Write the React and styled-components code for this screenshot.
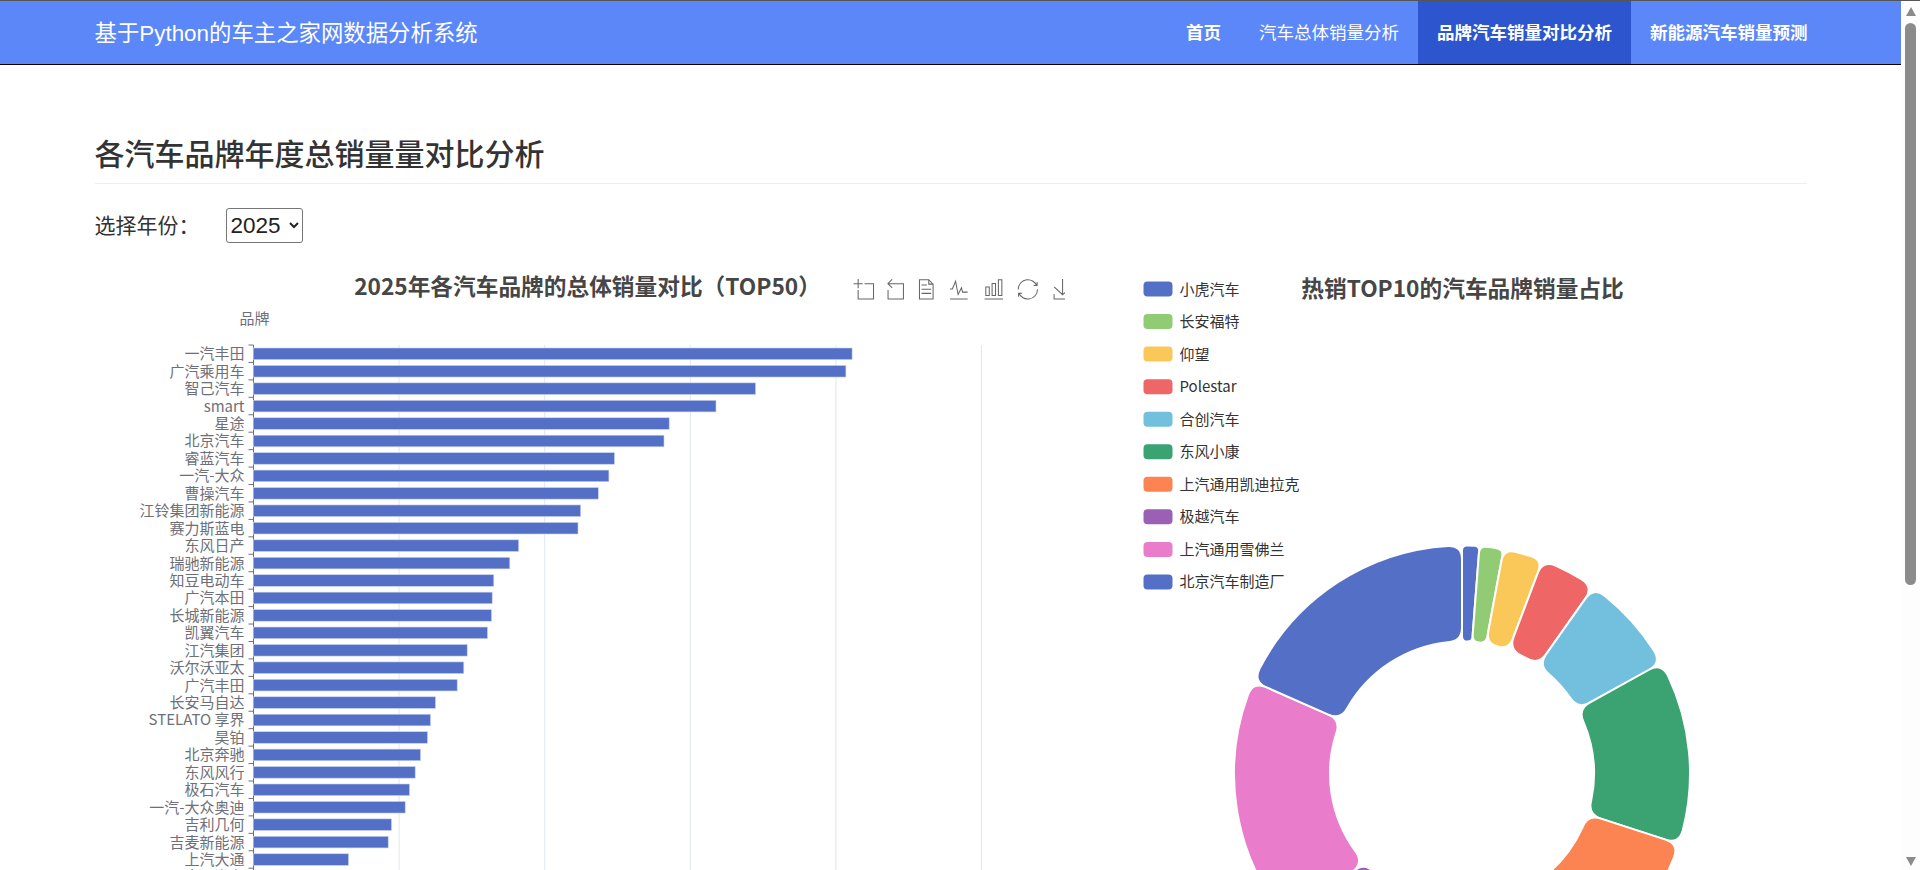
import React from 'react';
import styled, { createGlobalStyle } from 'styled-components';

const CJK = '"Liberation Sans", "Noto Sans CJK SC", sans-serif';
const CHART_FONT = '"Noto Sans CJK SC", "Noto Sans", sans-serif';

const GlobalStyle = createGlobalStyle`
  body {
    margin: 0;
    background: #fff;
    color: #333;
    border-top: 1px solid #555;
    font-family: ${CJK};
  }
`;

const Page = styled.div`
  padding-right: 19px;
`;
const TopBar = styled.nav`
  height: 63px;
  background: #5b87f8;
  border-bottom: 1px solid #000;
`;
const Container = styled.div`
  width: 1712px;
  margin: 0 auto;
`;
const BarInner = styled(Container)`
  display: flex;
  justify-content: space-between;
  align-items: stretch;
  height: 100%;
`;
const Brand = styled.a`
  align-self: center;
  padding-bottom: 3px;
  font-size: 22.4px;
  color: #fff;
`;
const NavList = styled.ul`
  display: flex;
  list-style: none;
  margin: 0 -20px 0 0;
  padding: 0;
`;
const NavItem = styled.li`
  display: flex;
  align-items: center;
  padding: 0 19px 3px;
  font-size: 17.5px;
  font-weight: ${(p) => (p.$bold ? 700 : 400)};
  color: #fff;
  background: ${(p) => (p.$active ? '#2c55ce' : 'transparent')};
`;
const PageHeader = styled.h1`
  margin: 64px 0 0;
  padding: 3px 0 6px;
  height: 45px;
  line-height: 45px;
  font-size: 30px;
  font-weight: 500;
  color: #333;
  border-bottom: 1px solid #eee;
`;
const YearRow = styled.div`
  display: flex;
  align-items: center;
  gap: 26px;
  margin-top: 24px;
  font-size: 21px;
`;
const YearLabel = styled.label`
  padding-bottom: 4px;
`;
const YearSelect = styled.select`
  width: 77px;
  height: 35px;
  font-family: "Liberation Sans", sans-serif;
  font-size: 22.5px;
  color: #222;
  background: #fff;
  border: 1px solid #767676;
  border-radius: 3px;
`;
const ChartRow = styled.div`
  display: flex;
  margin-top: 18px;
  height: 1000px;
`;
const ChartSvg = styled.svg`
  display: block;
  flex: none;
  font-family: ${CHART_FONT};
`;
const ChartTitle = styled.text`
  font-size: 22.7px;
  font-weight: 700;
  fill: #464646;
  text-anchor: middle;
  dominant-baseline: central;
`;
const AxisText = styled.text`
  font-size: 15px;
  fill: #6e7079;
  text-anchor: ${(p) => p.$anchor || 'end'};
  dominant-baseline: central;
`;
const LegendText = styled.text`
  font-size: 15px;
  fill: #333;
  dominant-baseline: central;
`;
const ScrollRail = styled.div`
  position: fixed;
  top: 1px;
  right: 0;
  bottom: 0;
  width: 19px;
  display: flex;
  flex-direction: column;
  align-items: center;
  background: #fdfdfd;
`;
const ScrollArrow = styled.span`
  width: 0;
  height: 0;
  border-left: 5.5px solid transparent;
  border-right: 5.5px solid transparent;
  border-${(p) => (p.$down ? 'top' : 'bottom')}: 9px solid #8b8b8b;
  margin-top: ${(p) => (p.$down ? 'auto' : '6px')};
  margin-bottom: ${(p) => (p.$down ? '4px' : '0')};
`;
const ScrollThumb = styled.span`
  width: 11px;
  height: 562px;
  margin-top: 7px;
  background: #8b8b8b;
  border-radius: 6px;
`;

const brands = [
  ['一汽丰田', 851.6], ['广汽乘用车', 845.4], ['智己汽车', 755.1], ['smart', 715.5],
  ['星途', 668.7], ['北京汽车', 663.5], ['睿蓝汽车', 614], ['一汽-大众', 608.4],
  ['曹操汽车', 597.8], ['江铃集团新能源', 580.2], ['赛力斯蓝电', 577.5], ['东风日产', 518.2],
  ['瑞驰新能源', 509.3], ['知豆电动车', 493.3], ['广汽本田', 491.7], ['长城新能源', 491],
  ['凯翼汽车', 487], ['江汽集团', 466.7], ['沃尔沃亚太', 463.3], ['广汽丰田', 456.7],
  ['长安马自达', 435], ['STELATO 享界', 430], ['昊铂', 427], ['北京奔驰', 420],
  ['东风风行', 414.7], ['极石汽车', 409], ['一汽-大众奥迪', 404.7], ['吉利几何', 391],
  ['吉麦新能源', 387.7], ['上汽大通', 348], ['岚图汽车', 340],
];

const toolIcons = [
  [853, 'M0,13.5h26.9 M13.5,26.9V0 M32.1,13.5H58V58H13.5 V32.1'],
  [884, 'M22,1.4L9.9,13.5l12.3,12.3 M10.3,13.5H54.9v44.6 H10.3v-26'],
  [915, 'M17.5,17.3H33 M17.5,17.3H33 M45.4,29.5h-28 M11.5,2v56H51V14.8L38.4,2H11.5z M38.4,2.2v12.7H51 M45.4,41.7h-28'],
  [948, 'M4.1,28.9h7.1l9.3-22l7.4,38l9.7-19.7l3,12.8h14.9M4.1,58h51.4'],
  [983, 'M6.7,22.9h10V48h-10V22.9zM24.9,13h10v35h-10V13zM43.2,2h10v46h-10V2zM3.1,58h53.7'],
  [1017, 'M3.8,33.4 M47,18.9h9.8V8.7 M56.3,20.1 C52.1,9,40.5,0.6,26.8,2.1C12.6,3.7,1.6,16.2,2.1,30.6 M13,41.1H3.1v10.2 M3.7,39.9c4.2,11.1,15.8,19.5,29.5,18 c14.2-1.6,25.2-14.1,24.7-28.5'],
  [1052, 'M4.7,22.9L29.3,45.5L54.7,23.4M4.6,43.6L4.6,58L53.8,58L53.8,43.6M29.2,45.1L29.2,0'],
];

const slices = [
  ['小虎汽车', '#5470c6', 0, 4.4],
  ['长安福特', '#91cc75', 4.4, 10.5],
  ['仰望', '#fac858', 10.5, 20.7],
  ['Polestar', '#ee6666', 20.7, 35.2],
  ['合创汽车', '#73c0de', 35.2, 61],
  ['东风小康', '#3ba272', 61, 108],
  ['上汽通用凯迪拉克', '#fc8452', 108, 168],
  ['极越汽车', '#9a60b4', 168, 228],
  ['上汽通用雪佛兰', '#ea7ccc', 228, 293.8],
  ['北京汽车制造厂', '#5470c6', 293.8, 360],
];

const ROW = 17.44;
const AXIS_TOP = 346;
const AXIS_X = 253;
const GRID = [398.6, 544.2, 689.8, 835.4, 981];

const CX = 1461.5;
const CY = 774.5;
const OUTER = 228;
const INNER = 132;

const polar = (r, deg) => {
  const a = (deg * Math.PI) / 180;
  return `${(CX + r * Math.sin(a)).toFixed(2)} ${(CY - r * Math.cos(a)).toFixed(2)}`;
};

// ring slice with rounded corners, angles clockwise from 12 o'clock
const slicePath = (from, to) => {
  const span = ((to - from) * Math.PI) / 180;
  const c = Math.min(14, (INNER * span) / 2);
  const dO = ((c / OUTER) * 180) / Math.PI;
  const dI = ((c / INNER) * 180) / Math.PI;
  const big = to - from > 180 ? 1 : 0;
  return [
    `M${polar(OUTER, from + dO)}`,
    `A${OUTER} ${OUTER} 0 ${big} 1 ${polar(OUTER, to - dO)}`,
    `Q${polar(OUTER, to)} ${polar(OUTER - c, to)}`,
    `L${polar(INNER + c, to)}`,
    `Q${polar(INNER, to)} ${polar(INNER, to - dI)}`,
    `A${INNER} ${INNER} 0 ${big} 0 ${polar(INNER, from + dI)}`,
    `Q${polar(INNER, from)} ${polar(INNER + c, from)}`,
    `L${polar(OUTER - c, from)}`,
    `Q${polar(OUTER, from)} ${polar(OUTER, from + dO)}`,
    'Z',
  ].join(' ');
};

const BrandBars = () => (
  <ChartSvg width="970" height="1000" viewBox="94.5 262 970 1000">
    <ChartTitle x="587" y="286">2025年各汽车品牌的总体销量对比（TOP50）</ChartTitle>
    {toolIcons.map(([x, d]) => (
      <g key={x} transform={`translate(${x} 280) scale(0.345)`}>
        <path d={d} fill="none" stroke="#666" strokeWidth="3" />
      </g>
    ))}
    <AxisText x={AXIS_X + 1} y="318" $anchor="middle">品牌</AxisText>
    {GRID.map((x) => (
      <line key={x} x1={x} x2={x} y1={AXIS_TOP} y2={AXIS_TOP + ROW * brands.length} stroke="#e0e6f1" />
    ))}
    <line x1={AXIS_X} x2={AXIS_X} y1={AXIS_TOP} y2={AXIS_TOP + ROW * brands.length} stroke="#6e7079" />
    {brands.map(([name, end], i) => {
      const top = AXIS_TOP + ROW * i;
      return (
        <g key={name}>
          <line x1={AXIS_X - 5} x2={AXIS_X} y1={top} y2={top} stroke="#6e7079" />
          <rect x={AXIS_X} y={top + 3} width={end - AXIS_X} height={11.6} fill="#5470c6" stroke="#c8d2f0" strokeWidth="0.6" />
          <AxisText x="244" y={top + ROW / 2 - 1}>{name}</AxisText>
        </g>
      );
    })}
  </ChartSvg>
);

const BrandShare = () => (
  <ChartSvg width="742" height="1000" viewBox="1064.5 262 742 1000">
    <ChartTitle x="1462" y="288">热销TOP10的汽车品牌销量占比</ChartTitle>
    {slices.map(([name, color], i) => (
      <g key={name}>
        <rect x="1143" y={282.5 + 32.55 * i} width="29" height="15" rx="4" fill={color} />
        <LegendText x="1179" y={289 + 32.55 * i}>{name}</LegendText>
      </g>
    ))}
    {slices.map(([name, color, from, to]) => (
      <path key={name} d={slicePath(from, to)} fill={color} stroke="#fff" strokeWidth="2" />
    ))}
  </ChartSvg>
);

export default function App() {
  return (
    <Page>
      <GlobalStyle />
      <TopBar>
        <BarInner>
          <Brand>基于Python的车主之家网数据分析系统</Brand>
          <NavList>
            <NavItem $bold>首页</NavItem>
            <NavItem>汽车总体销量分析</NavItem>
            <NavItem $bold $active>品牌汽车销量对比分析</NavItem>
            <NavItem $bold>新能源汽车销量预测</NavItem>
          </NavList>
        </BarInner>
      </TopBar>
      <Container>
        <PageHeader>各汽车品牌年度总销量量对比分析</PageHeader>
        <YearRow>
          <YearLabel>选择年份：</YearLabel>
          <YearSelect defaultValue="2025">
            <option>2025</option>
            <option>2024</option>
            <option>2023</option>
          </YearSelect>
        </YearRow>
        <ChartRow>
          <BrandBars />
          <BrandShare />
        </ChartRow>
      </Container>
      <ScrollRail>
        <ScrollArrow />
        <ScrollThumb />
        <ScrollArrow $down />
      </ScrollRail>
    </Page>
  );
}
